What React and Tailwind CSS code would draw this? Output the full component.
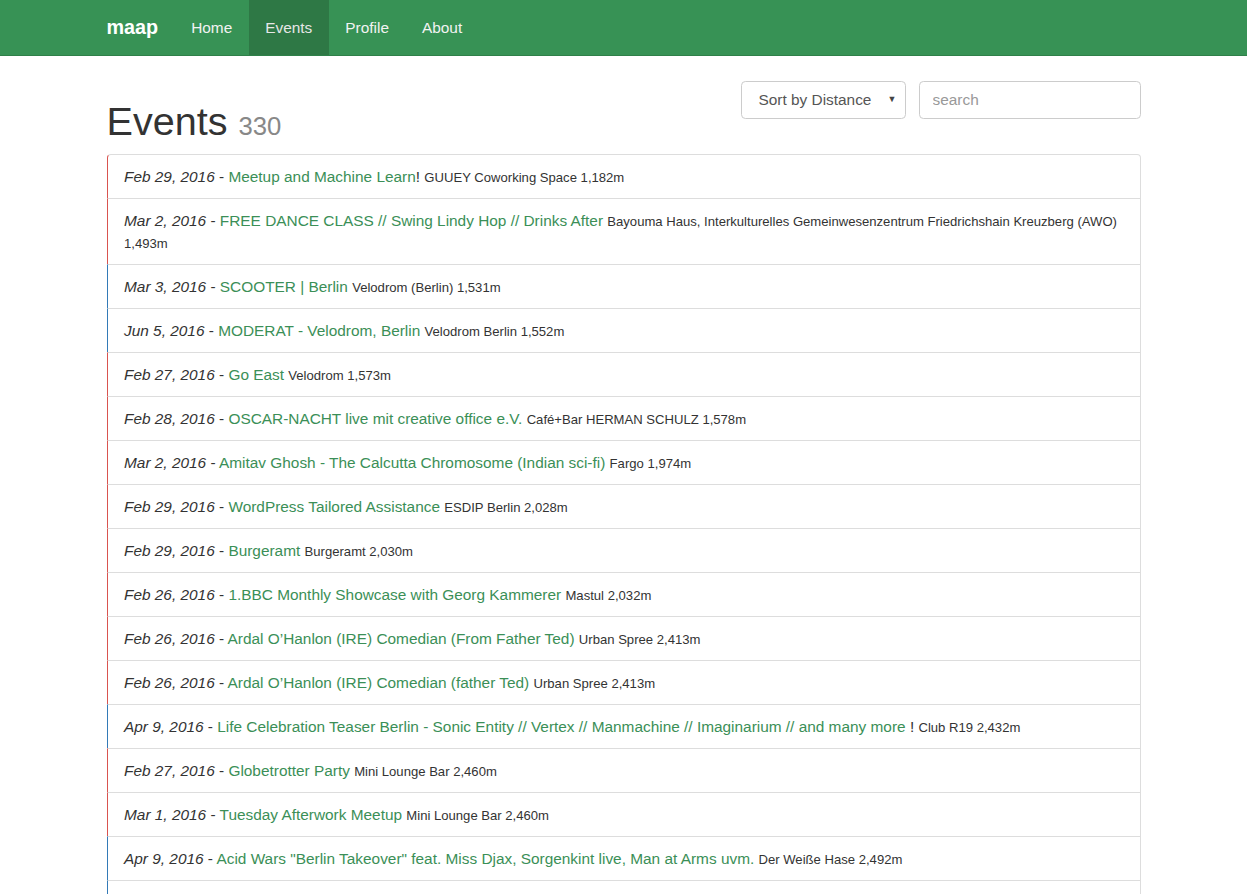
// App.jsx
// Events listing page with top navbar, sort/search controls and event rows

const events = [
  { date: 'Feb 29, 2016', title: 'Meetup and Machine Learn', bang: true, venue: 'GUUEY Coworking Space', dist: '1,182m', tone: 'red' },
  { date: 'Mar 2, 2016', title: 'FREE DANCE CLASS // Swing Lindy Hop // Drinks After', venue: 'Bayouma Haus, Interkulturelles Gemeinwesenzentrum Friedrichshain Kreuzberg (AWO)', dist: '1,493m', tone: 'red' },
  { date: 'Mar 3, 2016', title: 'SCOOTER | Berlin', venue: 'Velodrom (Berlin)', dist: '1,531m', tone: 'blue' },
  { date: 'Jun 5, 2016', title: 'MODERAT - Velodrom, Berlin', venue: 'Velodrom Berlin', dist: '1,552m', tone: 'blue' },
  { date: 'Feb 27, 2016', title: 'Go East', venue: 'Velodrom', dist: '1,573m', tone: 'red' },
  { date: 'Feb 28, 2016', title: 'OSCAR-NACHT live mit creative office e.V.', venue: 'Café+Bar HERMAN SCHULZ', dist: '1,578m', tone: 'red' },
  { date: 'Mar 2, 2016', title: 'Amitav Ghosh - The Calcutta Chromosome (Indian sci-fi)', venue: 'Fargo', dist: '1,974m', tone: 'red' },
  { date: 'Feb 29, 2016', title: 'WordPress Tailored Assistance', venue: 'ESDIP Berlin', dist: '2,028m', tone: 'red' },
  { date: 'Feb 29, 2016', title: 'Burgeramt', venue: 'Burgeramt', dist: '2,030m', tone: 'red' },
  { date: 'Feb 26, 2016', title: '1.BBC Monthly Showcase with Georg Kammerer', venue: 'Mastul', dist: '2,032m', tone: 'red' },
  { date: 'Feb 26, 2016', title: 'Ardal O’Hanlon (IRE) Comedian (From Father Ted)', venue: 'Urban Spree', dist: '2,413m', tone: 'red' },
  { date: 'Feb 26, 2016', title: 'Ardal O’Hanlon (IRE) Comedian (father Ted)', venue: 'Urban Spree', dist: '2,413m', tone: 'red' },
  { date: 'Apr 9, 2016', title: 'Life Celebration Teaser Berlin - Sonic Entity // Vertex // Manmachine // Imaginarium // and many more ', bang: true, venue: 'Club R19', dist: '2,432m', tone: 'blue' },
  { date: 'Feb 27, 2016', title: 'Globetrotter Party', venue: 'Mini Lounge Bar', dist: '2,460m', tone: 'red' },
  { date: 'Mar 1, 2016', title: 'Tuesday Afterwork Meetup', venue: 'Mini Lounge Bar', dist: '2,460m', tone: 'red' },
  { date: 'Apr 9, 2016', title: 'Acid Wars "Berlin Takeover" feat. Miss Djax, Sorgenkint live, Man at Arms uvm.', venue: 'Der Weiße Hase', dist: '2,492m', tone: 'blue' },
];

function EventRow({ event, first }) {
  return (
    <div
      className={`border border-[#ddd] -mb-px px-[16.5px] py-[10.5px] leading-[22px] ${
        event.tone === 'red' ? 'border-l-[#d9534f]' : 'border-l-[#337ab7]'
      } ${first ? 'rounded-t-[4px]' : ''}`}
    >
      <em className="italic">{event.date}</em> -{' '}
      <a href="#" className="text-[#3b8f57]">{event.title}</a>
      {event.bang && '!'}{' '}
      <small className="text-[13.1px] leading-none">
        {event.venue} {event.dist}
      </small>
    </div>
  );
}

function App() {
  return (
    <div className="min-h-screen bg-white text-[#333] text-[15.4px]" style={{ fontFamily: '"Liberation Sans", Arial, sans-serif' }}>
      {/* Navbar */}
      <nav className="bg-[#379255] border-b border-[#2f8049]">
        <div className="w-[1067px] mx-auto px-[16.5px] flex h-[55px]">
          <a href="#" className="text-white font-bold text-[19.8px] leading-[55px] pr-[16.5px]">maap</a>
          <ul className="flex">
            <li><a href="#" className="block px-[16.5px] leading-[55px] text-[#f2f2f2]">Home</a></li>
            <li><a href="#" className="block px-[16.5px] leading-[55px] text-[#e6e6e6] bg-[#2e7845]">Events</a></li>
            <li><a href="#" className="block px-[16.5px] leading-[55px] text-[#f2f2f2]">Profile</a></li>
            <li><a href="#" className="block px-[16.5px] leading-[55px] text-[#f2f2f2]">About</a></li>
          </ul>
        </div>
      </nav>

      <div className="w-[1067px] mx-auto px-[16.5px] pt-[25px]">
        {/* Header */}
        <div className="flex justify-between items-start">
          <h1 className="mt-[19px] mb-[10.5px] text-[39.6px] leading-[43.5px]">
            Events <small className="text-[25.7px] leading-none text-[#888]">330</small>
          </h1>
          <div className="flex gap-[13px]">
            <div className="relative w-[165px] h-[38px] border border-[#ccc] rounded-[4.4px] flex items-center pl-[17px] text-[#555]">
              Sort by Distance
              <span className="absolute right-[8px] top-[11px] text-[9px] text-[#444]">▼</span>
            </div>
            <input
              placeholder="search"
              className="w-[222px] h-[38px] border border-[#ccc] rounded-[4.4px] px-[13px] placeholder-[#999] outline-none"
            />
          </div>
        </div>

        {/* Events list */}
        <div>
          {events.map((event, i) => (
            <EventRow key={i} event={event} first={i === 0} />
          ))}
          {/* next row continues below the fold */}
          <div className="border border-[#ddd] border-l-[#337ab7] h-[44px]" />
        </div>
      </div>
    </div>
  );
}

export default App;
